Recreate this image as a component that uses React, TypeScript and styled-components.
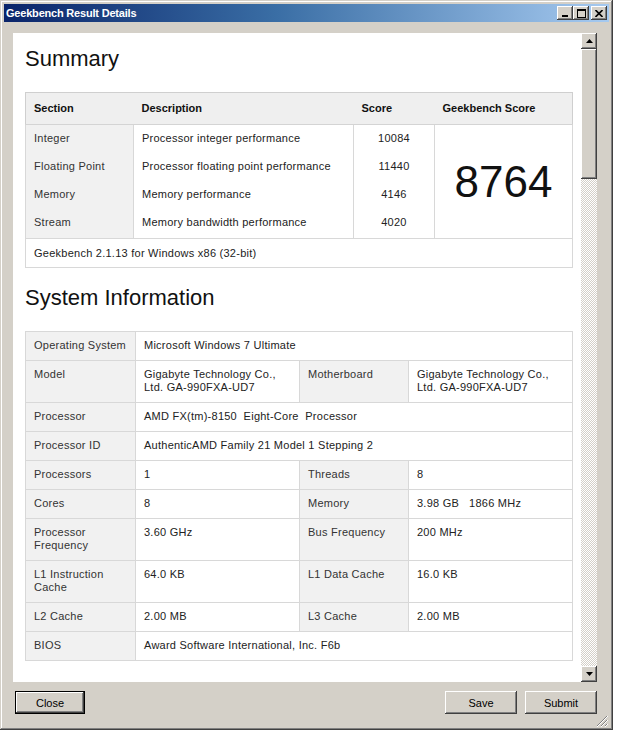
import React from 'react';
import styled, { createGlobalStyle } from 'styled-components';

const GlobalStyle = createGlobalStyle`
  html, body {
    margin: 0;
    padding: 0;
    background: #fff;
    overflow: hidden;
  }
  body {
    font-family: "Liberation Sans", Arial, sans-serif;
  }
`;

const bevel = `
  box-shadow: inset -1px -1px #404040, inset 1px 1px #fff,
    inset -2px -2px #808080, inset 2px 2px #d4d0c8;
`;

const Window = styled.div`
  width: 613px;
  height: 730px;
  box-sizing: border-box;
  padding: 4px;
  background: #d4d0c8;
  box-shadow: inset -1px -1px #404040, inset 1px 1px #d4d0c8,
    inset -2px -2px #808080, inset 2px 2px #fff;
  display: flex;
  flex-direction: column;
`;

const TitleBar = styled.div`
  height: 18px;
  display: flex;
  align-items: center;
  padding: 0 2px 0 2px;
  background: linear-gradient(90deg, #0a246a 0%, #3a6ea5 45%, #a6caf0 100%);
`;

const TitleText = styled.span`
  color: #fff;
  font-weight: bold;
  font-size: 11px;
  letter-spacing: -0.2px;
`;

const TitleButtons = styled.div`
  margin-left: auto;
  display: flex;
  align-items: center;
`;

const TitleButton = styled.div<{ $gap?: boolean }>`
  width: 16px;
  height: 14px;
  margin-left: ${(p) => (p.$gap ? '2px' : '0')};
  background: #d4d0c8;
  ${bevel}
  display: flex;
  align-items: center;
  justify-content: center;
`;

const Body = styled.div`
  flex: 1;
  display: flex;
  flex-direction: column;
  padding: 11px 12px 0 9px;
`;

const Panel = styled.div`
  height: 649px;
  display: flex;
`;

const Content = styled.div`
  flex: 1;
  background: #fff;
  overflow: hidden;
  padding: 0 9px 0 12px;
`;

const Heading = styled.h1<{ $top: number }>`
  margin: ${(p) => p.$top}px 0 20px;
  font-size: 22px;
  line-height: 26px;
  font-weight: normal;
  color: #111;
`;

const Table = styled.table`
  width: 547px;
  border-collapse: collapse;
  table-layout: fixed;
  border: 1px solid #cfcfcf;
  font-size: 11px;
  line-height: 13px;
  letter-spacing: 0.25px;
  color: #222;
`;

const HeadCell = styled.th`
  text-align: left;
  font-weight: bold;
  padding: 9px 8px;
  background: #efefef;
  border-bottom: 1px solid #d4d4d4;
  letter-spacing: 0;
  color: #111;
`;

const Cell = styled.td<{ $label?: boolean; $center?: boolean; $pad?: string }>`
  padding: ${(p) => p.$pad || '7px 8px 8px'};
  vertical-align: top;
  white-space: pre-wrap;
  text-align: ${(p) => (p.$center ? 'center' : 'left')};
  background: ${(p) => (p.$label ? '#f1f1f1' : '#fff')};
  border: 1px solid #d8d8d8;
  color: ${(p) => (p.$label ? '#333' : '#222')};
`;

const BodyCell = styled(Cell)`
  border-top: none;
  border-bottom: none;
`;

const BigScore = styled.td`
  text-align: center;
  vertical-align: middle;
  font-size: 44px;
  line-height: 44px;
  letter-spacing: 0;
  color: #111;
  border: 1px solid #d8d8d8;
  border-top: none;
`;

const Scrollbar = styled.div`
  width: 16px;
  display: flex;
  flex-direction: column;
  background: repeating-conic-gradient(#d4d0c8 0 25%, #fff 0 50%) 0 0 / 2px 2px;
`;

const ScrollButton = styled.div`
  width: 16px;
  height: 16px;
  box-sizing: border-box;
  background: #d4d0c8;
  ${bevel}
  display: flex;
  align-items: center;
  justify-content: center;
`;

const Thumb = styled.div`
  height: 130px;
  background: #d4d0c8;
  ${bevel}
`;

const Track = styled.div`
  flex: 1;
`;

const ButtonRow = styled.div`
  margin-top: 9px;
  display: flex;
  align-items: flex-start;
  padding-left: 2px;
  position: relative;
  flex: 1;
`;

const Button = styled.button<{ $default?: boolean; $w: number }>`
  width: ${(p) => p.$w}px;
  height: 23px;
  margin-left: ${(p) => (p.$default ? '0' : '8px')};
  padding: 0;
  border: ${(p) => (p.$default ? '1px solid #000' : 'none')};
  background: #d4d0c8;
  ${bevel}
  font-family: "Liberation Sans", Arial, sans-serif;
  font-size: 11px;
  color: #000;
`;

const Spacer = styled.div`
  flex: 1;
`;

const Grip = styled.div`
  position: absolute;
  right: -11px;
  bottom: 1px;
  width: 12px;
  height: 12px;
`;

const summaryRows = [
  ['Integer', 'Processor integer performance', '10084'],
  ['Floating Point', 'Processor floating point performance', '11440'],
  ['Memory', 'Memory performance', '4146'],
  ['Stream', 'Memory bandwidth performance', '4020'],
];

type SysRow = { label: string; value: string; label2?: string; value2?: string };

const systemRows: SysRow[] = [
  { label: 'Operating System', value: 'Microsoft Windows 7 Ultimate' },
  {
    label: 'Model',
    value: 'Gigabyte Technology Co., Ltd. GA-990FXA-UD7',
    label2: 'Motherboard',
    value2: 'Gigabyte Technology Co., Ltd. GA-990FXA-UD7',
  },
  { label: 'Processor', value: 'AMD FX(tm)-8150  Eight-Core  Processor' },
  { label: 'Processor ID', value: 'AuthenticAMD Family 21 Model 1 Stepping 2' },
  { label: 'Processors', value: '1', label2: 'Threads', value2: '8' },
  { label: 'Cores', value: '8', label2: 'Memory', value2: '3.98 GB   1866 MHz' },
  { label: 'Processor Frequency', value: '3.60 GHz', label2: 'Bus Frequency', value2: '200 MHz' },
  { label: 'L1 Instruction Cache', value: '64.0 KB', label2: 'L1 Data Cache', value2: '16.0 KB' },
  { label: 'L2 Cache', value: '2.00 MB', label2: 'L3 Cache', value2: '2.00 MB' },
  { label: 'BIOS', value: 'Award Software International, Inc. F6b' },
];

const Arrow = ({ up }: { up?: boolean }) => (
  <svg width="7" height="4" viewBox="0 0 7 4">
    <path d={up ? 'M3.5 0 L7 4 L0 4 Z' : 'M0 0 L7 0 L3.5 4 Z'} fill="#000" />
  </svg>
);

const App = () => {
  return (
    <>
      <GlobalStyle />
      <Window>
        <TitleBar>
          <TitleText>Geekbench Result Details</TitleText>
          <TitleButtons>
            <TitleButton>
              <svg width="8" height="8" viewBox="0 0 8 8">
                <rect x="1" y="6" width="6" height="2" fill="#000" />
              </svg>
            </TitleButton>
            <TitleButton>
              <svg width="9" height="9" viewBox="0 0 9 9">
                <rect x="0.5" y="0.5" width="8" height="8" fill="none" stroke="#000" />
                <rect x="0" y="0" width="9" height="2" fill="#000" />
              </svg>
            </TitleButton>
            <TitleButton $gap>
              <svg width="8" height="7" viewBox="0 0 8 7">
                <path d="M0.5 0 L7.5 7 M7.5 0 L0.5 7" stroke="#000" strokeWidth="1.6" />
              </svg>
            </TitleButton>
          </TitleButtons>
        </TitleBar>

        <Body>
          <Panel>
            <Content>
              <Heading $top={13}>Summary</Heading>
              <Table>
                <colgroup>
                  <col style={{ width: 108 }} />
                  <col style={{ width: 220 }} />
                  <col style={{ width: 81 }} />
                  <col style={{ width: 138 }} />
                </colgroup>
                <thead>
                  <tr>
                    <HeadCell>Section</HeadCell>
                    <HeadCell>Description</HeadCell>
                    <HeadCell>Score</HeadCell>
                    <HeadCell>Geekbench Score</HeadCell>
                  </tr>
                </thead>
                <tbody>
                  {summaryRows.map(([section, desc, score], i) => (
                    <tr key={section}>
                      <BodyCell $label $pad={i === 3 ? '7px 8px 9px' : undefined}>
                        {section}
                      </BodyCell>
                      <BodyCell>{desc}</BodyCell>
                      <BodyCell $center>{score}</BodyCell>
                      {i === 0 && <BigScore rowSpan={4}>8764</BigScore>}
                    </tr>
                  ))}
                  <tr>
                    <Cell colSpan={4} $pad="8px 8px 7px">
                      Geekbench 2.1.13 for Windows x86 (32-bit)
                    </Cell>
                  </tr>
                </tbody>
              </Table>

              <Heading $top={17}>System Information</Heading>
              <Table>
                <colgroup>
                  <col style={{ width: 110 }} />
                  <col style={{ width: 164 }} />
                  <col style={{ width: 109 }} />
                  <col style={{ width: 164 }} />
                </colgroup>
                <tbody>
                  {systemRows.map((r) => (
                    <tr key={r.label}>
                      <Cell $label>{r.label}</Cell>
                      {r.label2 ? (
                        <>
                          <Cell>{r.value}</Cell>
                          <Cell $label>{r.label2}</Cell>
                          <Cell>{r.value2}</Cell>
                        </>
                      ) : (
                        <Cell colSpan={3}>{r.value}</Cell>
                      )}
                    </tr>
                  ))}
                </tbody>
              </Table>
            </Content>
            <Scrollbar>
              <ScrollButton>
                <Arrow up />
              </ScrollButton>
              <Thumb />
              <Track />
              <ScrollButton>
                <Arrow />
              </ScrollButton>
            </Scrollbar>
          </Panel>

          <ButtonRow>
            <Button $default $w={70}>
              Close
            </Button>
            <Spacer />
            <Button $w={72}>Save</Button>
            <Button $w={72}>Submit</Button>
            <Grip>
              <svg width="12" height="12" viewBox="0 0 12 12">
                <path d="M11 1 L1 11 M11 5 L5 11 M11 9 L9 11" stroke="#808080" strokeWidth="1" />
                <path d="M12 1 L1 12 M12 5 L5 12 M12 9 L9 12" stroke="#fff" strokeWidth="1" />
              </svg>
            </Grip>
          </ButtonRow>
        </Body>
      </Window>
    </>
  );
};

export default App;
